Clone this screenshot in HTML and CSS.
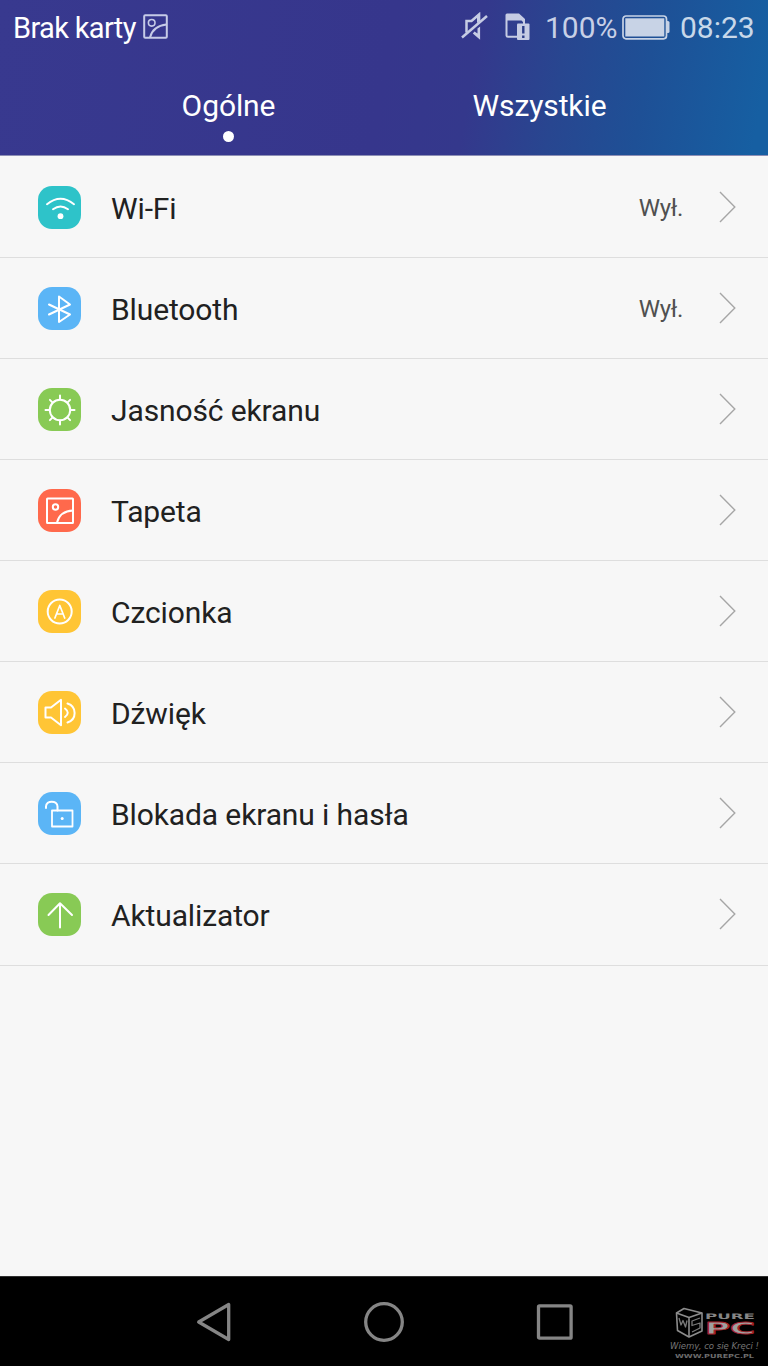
FILE: index.html
```html
<!DOCTYPE html>
<html lang="pl">
<head>
<meta charset="utf-8">
<title>Ustawienia</title>
<link rel="stylesheet" href="styles.css">
</head>
<body>
<div class="screen">
  <header class="header">
    <div class="status">
      <span class="carrier">Brak karty</span>
      <svg class="st-pic" width="25" height="25" viewBox="0 0 25 25" fill="none" stroke="#c6cbe7" stroke-width="2"><rect x="1.2" y="1.2" width="22.6" height="22.6" rx="1"/><circle cx="8.7" cy="8.8" r="3.3" stroke-width="1.6"/><path d="M7 23.5C9 15.500 14.500 11.500 23.500 10.500"/></svg>
      <span class="spacer"></span>
      <svg class="st-mute" width="27" height="28" viewBox="0 0 27 28"><path d="M5.500 20.500V9H10.500L18 2.500V8" fill="none" stroke="#c6cce4" stroke-width="2.500"/><path d="M19.100.5V9L16 11V5.500L12 8.500V7Z" fill="#c6cce4"/><path d="M19.100 14.500V27.800L11.800 21.500L13.500 19.500L16.500 21.500V16.500Z" fill="#c6cce4"/><path d="M1 25.500L26 4" stroke="#c6cce4" stroke-width="2.500"/></svg>
      <svg class="st-sim" width="25" height="28" viewBox="0 0 25 28"><path d="M1.500 8V22.500Q1.500 23.700 3 23.700H12M19 8V11" fill="none" stroke="#c6cce4" stroke-width="2"/><path d="M.5 8V2Q.5.500 2 .5H14L20 6V9H18L16.500 7.500H2.500V8Z" fill="#c6cce4"/><path d="M13 10.500H23.500Q24.500 10.500 24.500 11.500V26Q24.500 27 23.500 27H13Q12 27 12 26V11.500Q12 10.500 13 10.500Z" fill="#c6cce4"/><path d="M18.300 13V20.500M18.300 22.500V25" stroke="#2b3d88" stroke-width="2.400"/></svg>
      <span class="percent">100%</span>
      <svg class="st-bat" width="48" height="25" viewBox="0 0 48 25"><rect x="1" y="1" width="43.500" height="22.800" rx="3" fill="none" stroke="#c8d3e6" stroke-width="1.700"/><rect x="3.300" y="3.300" width="39" height="18.200" fill="#c8d3e6"/><path d="M45 6H46Q47.500 6 47.500 7.500V16.500Q47.500 18 46 18H45Z" fill="#c8d3e6"/></svg>
      <span class="clock">08:23</span>
    </div>
    <nav class="tabs">
      <div class="tab tab-left"><span class="tab-label">Ogólne</span><i class="dot"></i></div>
      <div class="tab tab-right"><span class="tab-label">Wszystkie</span></div>
    </nav>
  </header>
  <main class="list">
    <div class="row"><svg class="icon teal" viewBox="0 0 43 43"><path d="M9 18.200Q22.500 7.200 36 18.200M15 23.200Q22.500 17.700 30 23.200"/><circle class="solid" cx="22.500" cy="30.200" r="2.900"/></svg><span class="label">Wi-Fi</span><span class="value">Wył.</span><svg class="chev" viewBox="0 0 18 32"><path d="M1 1L15.800 16L1 31"/></svg></div>
    <div class="row"><svg class="icon blue" viewBox="0 0 43 43"><path d="M11 17.500L32 27.500L21 35V9.500L32 17.500L11 27.500"/></svg><span class="label">Bluetooth</span><span class="value">Wył.</span><svg class="chev" viewBox="0 0 18 32"><path d="M1 1L15.800 16L1 31"/></svg></div>
    <div class="row"><svg class="icon green" viewBox="0 0 43 43"><circle cx="22" cy="22" r="10.200"/><path d="M22 7.500V11.500M22 32.500V36.500M7.500 22H11.500M32.500 22H36.500M11.900 11.900L14.600 14.600M29.400 29.400L32.100 32.100M11.900 32.100L14.600 29.400M29.400 14.600L32.100 11.900"/></svg><span class="label">Jasność ekranu</span><svg class="chev" viewBox="0 0 18 32"><path d="M1 1L15.800 16L1 31"/></svg></div>
    <div class="row"><svg class="icon red" viewBox="0 0 43 43"><rect x="9" y="9.500" width="26" height="24.500" rx=".5"/><circle cx="17.500" cy="18" r="2.700"/><path d="M19 33.500Q22 22 35 21.500"/></svg><span class="label">Tapeta</span><svg class="chev" viewBox="0 0 18 32"><path d="M1 1L15.800 16L1 31"/></svg></div>
    <div class="row"><svg class="icon amber" viewBox="0 0 43 43"><circle cx="21.700" cy="21.500" r="12"/><path d="M16.900 28L21.800 15.500L26.700 28M18.600 24H25" stroke-width="1.700"/></svg><span class="label">Czcionka</span><svg class="chev" viewBox="0 0 18 32"><path d="M1 1L15.800 16L1 31"/></svg></div>
    <div class="row"><svg class="icon amber" viewBox="0 0 43 43"><path d="M7.500 16.500H13L23 8.800V34.200L13 26.500H7.500ZM27 17.500Q32.500 21.700 27 26M29.500 12.500C39 15.500 39 28.500 29.500 31.500"/></svg><span class="label">Dźwięk</span><svg class="chev" viewBox="0 0 18 32"><path d="M1 1L15.800 16L1 31"/></svg></div>
    <div class="row"><svg class="icon blue" viewBox="0 0 43 43"><path d="M8 16V14.500C8 8 19.500 8 19.500 14.500V18.500"/><rect x="14" y="18.500" width="20.500" height="16" stroke-width="1.800"/><circle class="solid" cx="24.200" cy="26.500" r="1.500"/></svg><span class="label">Blokada ekranu i hasła</span><svg class="chev" viewBox="0 0 18 32"><path d="M1 1L15.800 16L1 31"/></svg></div>
    <div class="row"><svg class="icon green" viewBox="0 0 43 43"><path d="M22 34.500V10.500M10.500 22L22 10.200L34 22"/></svg><span class="label">Aktualizator</span><svg class="chev" viewBox="0 0 18 32"><path d="M1 1L15.800 16L1 31"/></svg></div>
  </main>
  <footer class="navbar">
    <svg class="nav-back" width="36" height="42" viewBox="0 0 36 42"><path d="M2.700 21L32.700 3.500V38.500Z"/></svg>
    <svg class="nav-home" width="42" height="42" viewBox="0 0 42 42"><circle cx="21" cy="21" r="18.300"/></svg>
    <svg class="nav-recent" width="38" height="42" viewBox="0 0 38 42"><rect x="2.500" y="4.800" width="32.600" height="32.400" rx="1"/></svg>
    <svg class="brand" width="100" height="58" viewBox="-4 0 100 58">
      <path class="cube" d="M4.500 6L12 1.500L30 6V24L17 30L5.500 23.500Z"/>
      <path class="cube" d="M4.500 6L17 10.500V30M17 10.500L30 6"/>
      <path class="cube-side" d="M7 11L9 18L11 13.500L13.500 20L15 13.500M28 11L20 14V18.500L28 16V21L20 25"/>
      <text class="pure" x="33" y="11.500" textLength="50" lengthAdjust="spacingAndGlyphs">PURE</text>
      <text class="pc" x="33" y="26.500" textLength="50" lengthAdjust="spacingAndGlyphs">PC</text>
      <text class="motto" x="-2" y="42" textLength="89" lengthAdjust="spacingAndGlyphs">Wiemy, co się Kręci !</text>
      <text class="url" x="3" y="51" textLength="79" lengthAdjust="spacingAndGlyphs">WWW.PUREPC.PL</text>
    </svg>
  </footer>
</div>
</body>
</html>
```
FILE: styles.css
```css
* { box-sizing: border-box; }
body { margin: 0; font-family: Roboto, "Noto Sans", sans-serif; background: #f7f7f7; }
.screen { width: 768px; height: 1366px; display: flex; flex-direction: column; overflow: hidden; }
.header {
  height: 156px; color: #fff; border-bottom: 1px solid #8d8fb5;
  background: linear-gradient(100deg, #38398f 0%, #36368c 50%, #34388c 61%, #284690 72%, #1e5096 83%, #165fa2 98%);
}
.status { height: 56px; display: flex; align-items: flex-start; padding: 0 14px 0 13px; font-size: 29px; line-height: 56px; white-space: nowrap; }
.carrier { width: 130px; letter-spacing: -0.65px; }
.st-pic { margin-top: 14px; }
.spacer { flex: 1; }
.st-mute { margin: 12px 17px 0 0; }
.st-sim { margin: 13px 15px 0 0; }
.percent { width: 77px; font-size: 30px; color: #c8d0e6; }
.st-bat { margin: 15px 10px 0 0; }
.clock { width: 74px; font-size: 30px; color: #c8d8e9; }
.tabs { display: flex; height: 99px; }
.tab { width: 311px; display: flex; flex-direction: column; align-items: center; padding-top: 30px; }
.tab-left { margin-left: 73px; }
.tab-label { font-size: 30px; line-height: 40px; letter-spacing: -0.1px; }
.dot { width: 11px; height: 11px; border-radius: 50%; background: #fff; margin-top: 5px; }
.list { flex: 1; }
.row { height: 101px; border-bottom: 1px solid #dedede; display: flex; align-items: flex-start; padding: 28px 31px 0 38px; background: #f7f7f7; }
.row:first-child { height: 102px; padding-top: 29px; }
.row:last-child { height: 102px; }
.icon { width: 43px; height: 43px; margin-top: 0.5px; border-radius: 14px; fill: none; stroke: #fff; stroke-width: 2; stroke-linecap: round; stroke-linejoin: round; }
.icon .solid { fill: #fff; stroke: none; }
.teal { background: #2ec3c9; }
.blue { background: #5bb5f6; }
.green { background: #88ca55; }
.red { background: #ff694c; }
.amber { background: #ffc535; }
.label { margin-left: 30px; font-size: 30px; line-height: 48px; letter-spacing: -0.12px; color: #212121; flex: 1; }
.value { font-size: 24px; line-height: 46px; letter-spacing: -0.3px; color: #505050; margin-right: 36px; }
.chev { width: 18px; height: 32px; margin-top: 6px; fill: none; stroke: #a6a6a6; stroke-width: 1.4; }
.navbar { height: 90px; background: #000; display: flex; align-items: flex-start; padding: 24px 0 0 196px; border-top: 1px solid #303030; }
.navbar svg { fill: none; stroke: #858585; stroke-width: 3.3; stroke-linejoin: round; flex: none; }
.nav-home { margin-left: 131px; }
.nav-recent { margin-left: 131px; }
.navbar .brand { margin: 6px 0 0 94px; stroke: none; stroke-width: 0; }
.brand .cube { stroke: #8c8c8c; stroke-width: 1.6; }
.brand .cube-side { stroke: #7a7a7a; stroke-width: 1.3; }
.brand text { font-family: "DejaVu Sans", sans-serif; fill: #858585; }
.brand .pure { font-size: 7.5px; font-weight: bold; }
.brand .pc { font-size: 15px; font-weight: bold; fill: #a0a0a0; stroke: #a6202b; stroke-width: 0.8; }
.brand .motto { font-size: 8.5px; font-style: italic; fill: #777; }
.brand .url { font-size: 5.5px; font-weight: bold; fill: #6c6c6c; }
```
